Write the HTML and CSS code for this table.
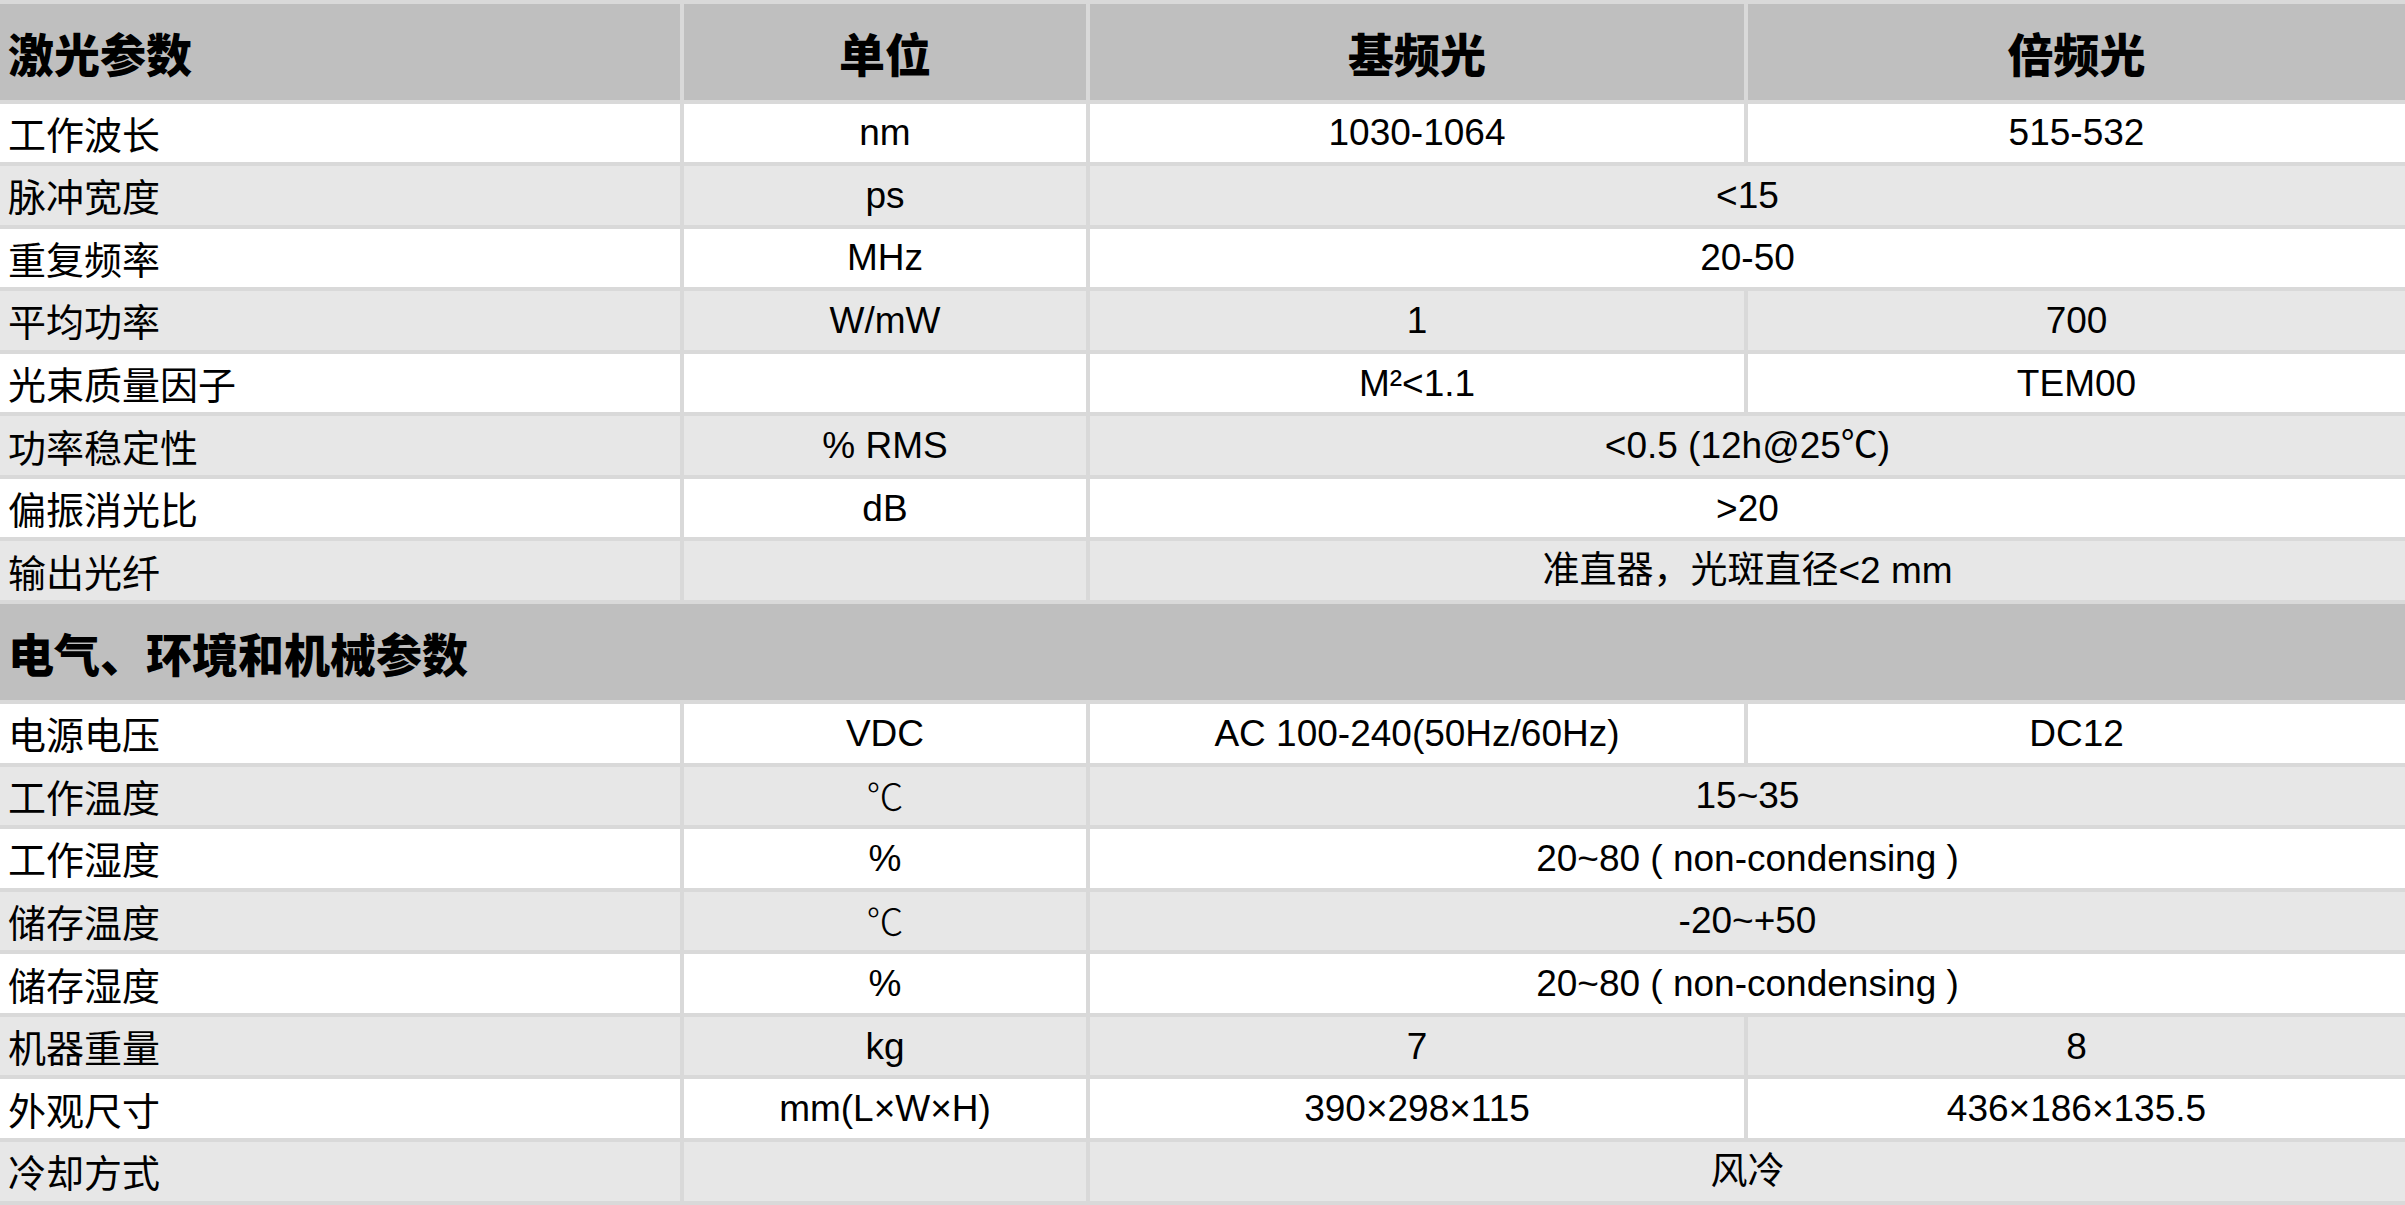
FILE: index.html
```html
<!DOCTYPE html>
<html lang="zh-CN">
<head>
<meta charset="utf-8">
<title>激光参数</title>
<link rel="stylesheet" href="styles.css">
</head>
<body>
<div class="spec">
  <div class="c hd left">激光参数</div>
  <div class="c hd">单位</div>
  <div class="c hd">基频光</div>
  <div class="c hd">倍频光</div>

  <div class="c left">工作波长</div>
  <div class="c">nm</div>
  <div class="c">1030-1064</div>
  <div class="c">515-532</div>

  <div class="c alt left">脉冲宽度</div>
  <div class="c alt">ps</div>
  <div class="c alt span2">&lt;15</div>

  <div class="c left">重复频率</div>
  <div class="c">MHz</div>
  <div class="c span2">20-50</div>

  <div class="c alt left">平均功率</div>
  <div class="c alt">W/mW</div>
  <div class="c alt">1</div>
  <div class="c alt">700</div>

  <div class="c left">光束质量因子</div>
  <div class="c"></div>
  <div class="c">M²&lt;1.1</div>
  <div class="c">TEM00</div>

  <div class="c alt left">功率稳定性</div>
  <div class="c alt">% RMS</div>
  <div class="c alt span2">&lt;0.5 (12h@25℃)</div>

  <div class="c left">偏振消光比</div>
  <div class="c">dB</div>
  <div class="c span2">&gt;20</div>

  <div class="c alt left">输出光纤</div>
  <div class="c alt"></div>
  <div class="c alt span2">准直器<span class="comma">，</span>光斑直径&lt;2 mm</div>

  <div class="c hd sec left">电气、环境和机械参数</div>

  <div class="c left">电源电压</div>
  <div class="c">VDC</div>
  <div class="c">AC 100-240(50Hz/60Hz)</div>
  <div class="c">DC12</div>

  <div class="c alt left">工作温度</div>
  <div class="c alt cjk">℃</div>
  <div class="c alt span2">15~35</div>

  <div class="c left">工作湿度</div>
  <div class="c">%</div>
  <div class="c span2">20~80 ( non-condensing )</div>

  <div class="c alt left">储存温度</div>
  <div class="c alt cjk">℃</div>
  <div class="c alt span2">-20~+50</div>

  <div class="c left">储存湿度</div>
  <div class="c">%</div>
  <div class="c span2">20~80 ( non-condensing )</div>

  <div class="c alt left">机器重量</div>
  <div class="c alt">kg</div>
  <div class="c alt">7</div>
  <div class="c alt">8</div>

  <div class="c left">外观尺寸</div>
  <div class="c">mm(L×W×H)</div>
  <div class="c">390×298×115</div>
  <div class="c">436×186×135.5</div>

  <div class="c alt left">冷却方式</div>
  <div class="c alt"></div>
  <div class="c alt span2">风冷</div>
</div>
</body>
</html>
```
FILE: styles.css
```css
html, body {
  margin: 0;
  padding: 0;
  background: #ffffff;
}

.spec {
  display: grid;
  grid-template-columns: 680px 402px 654px 657px;
  grid-template-rows: 95.5px repeat(8, 58.57px) 96px repeat(8, 58.57px);
  column-gap: 4px;
  row-gap: 4px;
  padding: 4px 0 4px 0;
  width: 2405px;
  background: #d9d9d9;
  font-family: "Liberation Sans", "Noto Sans CJK SC", sans-serif;
  font-size: 37px;
  color: #000000;
}

.c {
  display: flex;
  align-items: center;
  justify-content: center;
  background: #ffffff;
  white-space: nowrap;
  line-height: 1;
}

.c.alt {
  background: #e7e7e7;
}

.c.left {
  justify-content: flex-start;
  padding-left: 8px;
  font-family: "Noto Sans CJK SC", sans-serif;
  font-size: 38px;
}

.c.hd {
  background: #bfbfbf;
  font-family: "Noto Sans CJK SC", sans-serif;
  font-weight: 900;
  font-size: 46px;
}

.c.sec {
  grid-column: 1 / span 4;
}

.c.span2 {
  grid-column: span 2;
}

.c.cjk {
  font-family: "Noto Sans CJK SC", sans-serif;
  font-weight: 300;
}

.comma {
  display: inline-block;
  width: 1em;
  text-align: center;
}
```
